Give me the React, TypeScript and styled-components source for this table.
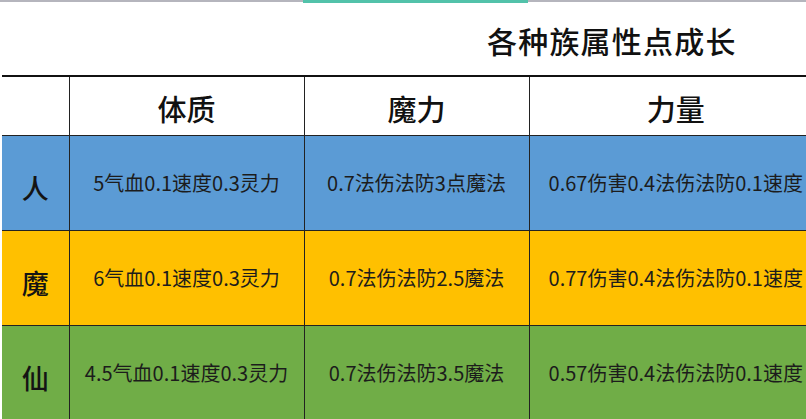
import React from "react";
import styled, { createGlobalStyle } from "styled-components";

const Global = createGlobalStyle`
  html, body { margin: 0; padding: 0; background: #ffffff; overflow: hidden; }
  body { font-family: "Noto Sans CJK SC", "Liberation Sans", sans-serif; }
`;

const Page = styled.div`
  width: 806px;
  height: 419px;
  overflow: hidden;
  background: #ffffff;
`;

const TopBar = styled.div`
  display: flex;
  height: 3px;
`;

const TopSegment = styled.div<{ $w?: number; $active?: boolean }>`
  flex: ${(p) => (p.$w ? `0 0 ${p.$w}px` : "1 1 auto")};
  height: ${(p) => (p.$active ? 3 : 2)}px;
  background: ${(p) => (p.$active ? "#52c2aa" : "#b5b5bd")};
`;

const TitleRow = styled.div`
  height: 72px;
  display: flex;
  align-items: center;
  padding-left: 487px;
  box-sizing: border-box;
`;

const Title = styled.h1`
  margin: 0;
  font-size: 30px;
  font-weight: 500;
  color: #111;
  letter-spacing: 1.2px;
  line-height: 1;
  transform: translateY(1px);
`;

const Table = styled.table`
  border-collapse: collapse;
  table-layout: fixed;
  width: 820px;
  margin-left: 2px;
  border-top: 2px solid #111;
`;

const HeadRow = styled.tr`
  height: 59px;
`;

const HeadCell = styled.th`
  padding: 5px 0 0 0;
  font-size: 29px;
  font-weight: 500;
  color: #111;
  text-align: center;
  vertical-align: middle;
  border-left: 1px solid #222;
  border-bottom: 1px solid #222;
  &:first-child { border-left: none; }
  line-height: 1;
`;

const Row = styled.tr<{ $bg: string }>`
  height: 95px;
  background: ${(p) => p.$bg};
`;

const LabelCell = styled.th`
  padding: 10px 0 0 0;
  font-size: 27px;
  font-weight: 500;
  color: #141414;
  text-align: center;
  vertical-align: middle;
  border-bottom: 1px solid #222;
  line-height: 1;
`;

const DataCell = styled.td`
  padding: 1px 0 0 0;
  font-size: 20px;
  color: #1c1c1c;
  text-align: center;
  vertical-align: middle;
  white-space: nowrap;
  border-left: 1px solid #222;
  border-bottom: 1px solid #222;
  line-height: 1;
`;

const headers = ["体质", "魔力", "力量"];

const rows = [
  { label: "人", bg: "#5b9bd5", cells: ["5气血0.1速度0.3灵力", "0.7法伤法防3点魔法", "0.67伤害0.4法伤法防0.1速度"] },
  { label: "魔", bg: "#ffc000", cells: ["6气血0.1速度0.3灵力", "0.7法伤法防2.5魔法", "0.77伤害0.4法伤法防0.1速度"] },
  { label: "仙", bg: "#70ad47", cells: ["4.5气血0.1速度0.3灵力", "0.7法伤法防3.5魔法", "0.57伤害0.4法伤法防0.1速度"] },
];

export default function App() {
  return (
    <Page>
      <Global />
      <TopBar>
        <TopSegment $w={303} />
        <TopSegment $w={225} $active />
        <TopSegment />
      </TopBar>
      <TitleRow>
        <Title>各种族属性点成长</Title>
      </TitleRow>
      <Table>
        <colgroup>
          <col style={{ width: 67 }} />
          <col style={{ width: 235 }} />
          <col style={{ width: 225 }} />
          <col style={{ width: 293 }} />
        </colgroup>
        <thead>
          <HeadRow>
            <HeadCell />
            {headers.map((h) => (
              <HeadCell key={h}>{h}</HeadCell>
            ))}
          </HeadRow>
        </thead>
        <tbody>
          {rows.map((r) => (
            <Row key={r.label} $bg={r.bg}>
              <LabelCell>{r.label}</LabelCell>
              {r.cells.map((c, i) => (
                <DataCell key={i}>{c}</DataCell>
              ))}
            </Row>
          ))}
        </tbody>
      </Table>
    </Page>
  );
}
